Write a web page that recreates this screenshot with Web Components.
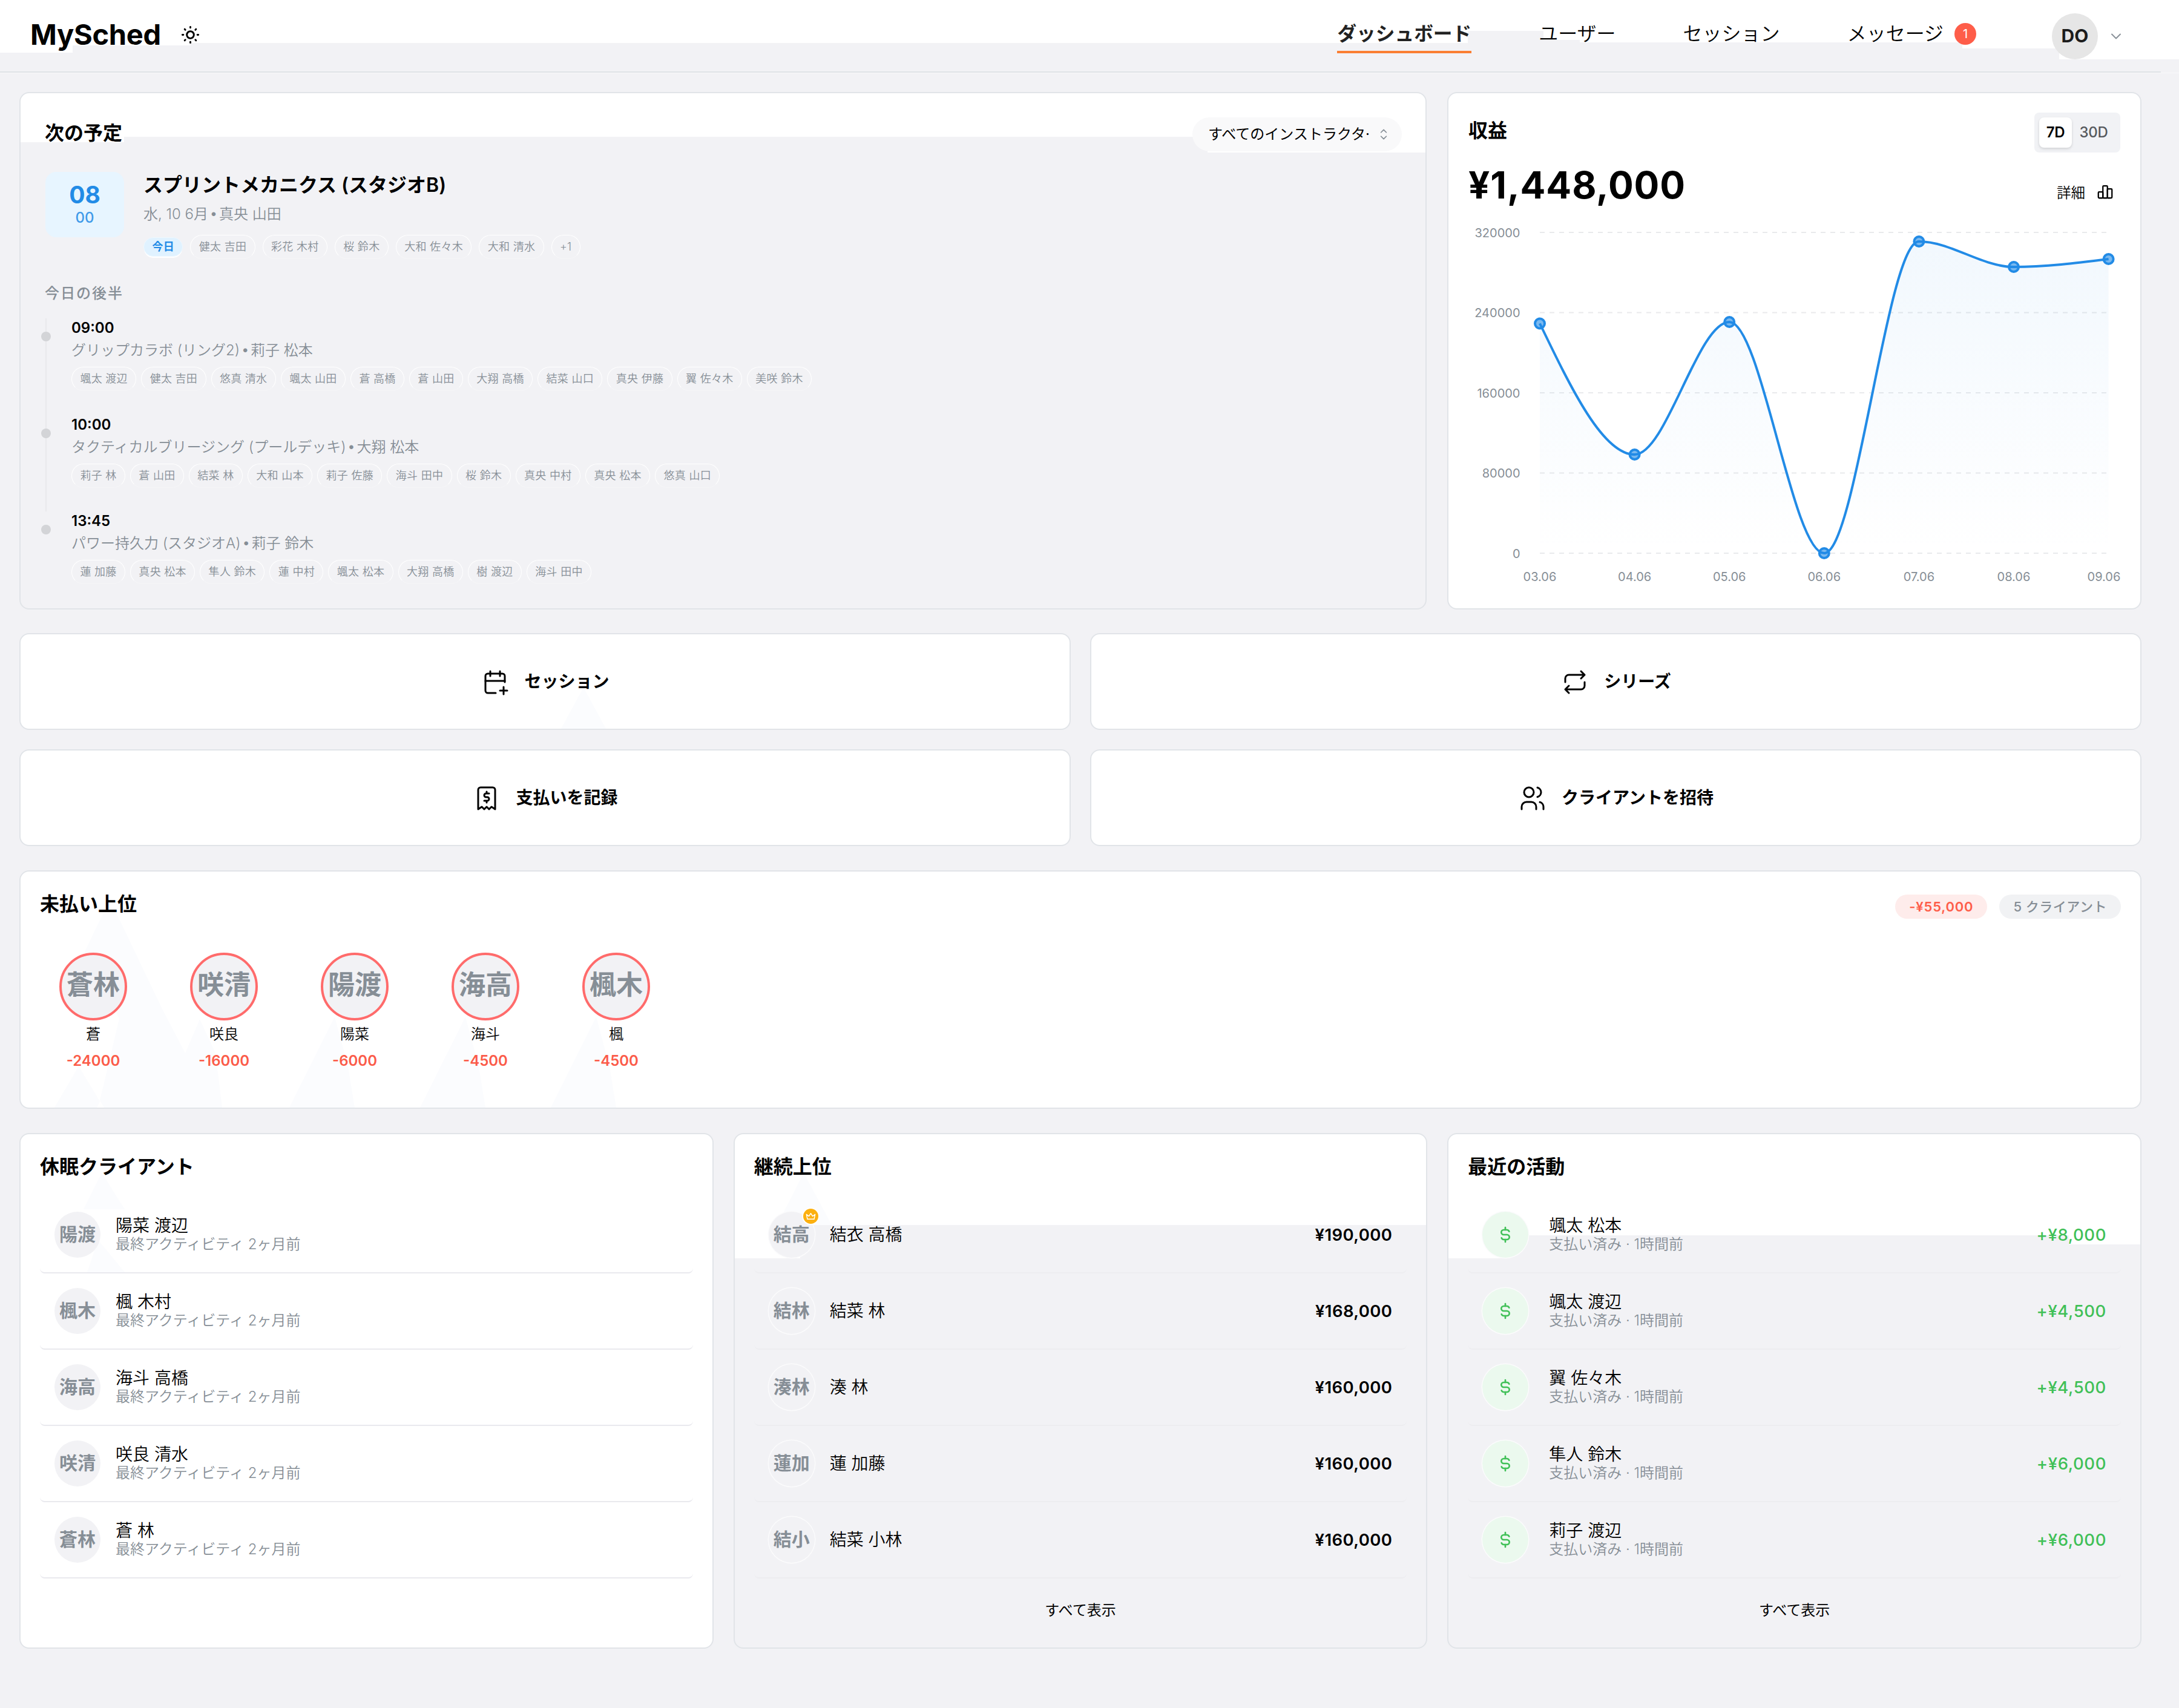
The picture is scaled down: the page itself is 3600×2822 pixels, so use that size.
<!DOCTYPE html>
<html lang="ja">
<head>
<meta charset="utf-8">
<title>MySched</title>
<style>
  * { box-sizing: border-box; }
  body {
    margin: 0;
    width: 3600px;
    height: 2822px;
    overflow: hidden;
    background: #f2f2f5;
    color: #000;
    font-family: Inter, "Noto Sans CJK JP", sans-serif;
  }
  main {
    width: 3570px;
    padding: 32px 32px 0;
    display: flex;
    flex-direction: column;
    gap: 40px;
  }
  .grid { display: grid; gap: 32px; }
  .top { grid-template-columns: 2325px 1fr; gap: 34px; height: 854px; }
  .actions { grid-template-columns: 1fr 1fr; grid-auto-rows: 160px; }
  .bottom { grid-template-columns: repeat(3, 1fr); gap: 33px; height: 852px; }
</style>
</head>
<body>
<my-header></my-header>
<main>
  <div class="grid top">
    <my-upcoming></my-upcoming>
    <my-revenue></my-revenue>
  </div>
  <div class="grid actions">
    <my-action icon="calendar">セッション</my-action>
    <my-action icon="repeat">シリーズ</my-action>
    <my-action icon="receipt">支払いを記録</my-action>
    <my-action icon="users">クライアントを招待</my-action>
  </div>
  <my-unpaid></my-unpaid>
  <div class="grid bottom">
    <my-card title-text="休眠クライアント" fill="dormant">
      <my-row initials="陽渡" sub="最終アクティビティ 2ヶ月前">陽菜 渡辺</my-row>
      <my-row initials="楓木" sub="最終アクティビティ 2ヶ月前">楓 木村</my-row>
      <my-row initials="海高" sub="最終アクティビティ 2ヶ月前">海斗 高橋</my-row>
      <my-row initials="咲清" sub="最終アクティビティ 2ヶ月前">咲良 清水</my-row>
      <my-row initials="蒼林" sub="最終アクティビティ 2ヶ月前">蒼 林</my-row>
    </my-card>
    <my-card title-text="継続上位" fill="loyal" more="すべて表示">
      <my-row soft crown initials="結高" amount="¥190,000">結衣 高橋</my-row>
      <my-row soft initials="結林" amount="¥168,000">結菜 林</my-row>
      <my-row soft initials="湊林" amount="¥160,000">湊 林</my-row>
      <my-row soft initials="蓮加" amount="¥160,000">蓮 加藤</my-row>
      <my-row soft initials="結小" amount="¥160,000">結菜 小林</my-row>
    </my-card>
    <my-card title-text="最近の活動" fill="activity" more="すべて表示">
      <my-row soft paid sub="支払い済み · 1時間前" amount="+¥8,000">颯太 松本</my-row>
      <my-row soft paid sub="支払い済み · 1時間前" amount="+¥4,500">颯太 渡辺</my-row>
      <my-row soft paid sub="支払い済み · 1時間前" amount="+¥4,500">翼 佐々木</my-row>
      <my-row soft paid sub="支払い済み · 1時間前" amount="+¥6,000">隼人 鈴木</my-row>
      <my-row soft paid sub="支払い済み · 1時間前" amount="+¥6,000">莉子 渡辺</my-row>
    </my-card>
  </div>
</main>

<script>
const ICONS = {
  sun: '<path d="M8 12a4 4 0 1 0 8 0a4 4 0 1 0 -8 0"/><path d="M3 12h1m8 -9v1m8 8h1m-9 8v1m-6.4 -15.4l.7 .7m12.1 -.7l-.7 .7m0 11.4l.7 .7m-12.1 -.7l-.7 .7"/>',
  calendar: '<path d="M12.5 21h-6.5a2 2 0 0 1 -2 -2v-12a2 2 0 0 1 2 -2h12a2 2 0 0 1 2 2v5"/><path d="M16 3v4M8 3v4M4 11h16M16 19h6M19 16v6"/>',
  repeat: '<path d="M4 12v-3a3 3 0 0 1 3 -3h13m-3 -3l3 3l-3 3"/><path d="M20 12v3a3 3 0 0 1 -3 3h-13m3 3l-3 -3l3 -3"/>',
  receipt: '<path d="M5 21v-16a2 2 0 0 1 2 -2h10a2 2 0 0 1 2 2v16l-3 -2l-2 2l-2 -2l-2 2l-2 -2l-3 2"/><path d="M14 8h-2.5a1.5 1.5 0 0 0 0 3h1a1.5 1.5 0 0 1 0 3h-2.5m2 0v1.5m0 -9v1.5"/>',
  users: '<path d="M5 7a4 4 0 1 0 8 0a4 4 0 1 0 -8 0"/><path d="M3 21v-2a4 4 0 0 1 4 -4h4a4 4 0 0 1 4 4v2"/><path d="M16 3.13a4 4 0 0 1 0 7.75"/><path d="M21 21v-2a4 4 0 0 0 -3 -3.85"/>',
  bars: '<path d="M3 13a1 1 0 0 1 1 -1h4a1 1 0 0 1 1 1v6a1 1 0 0 1 -1 1h-4a1 1 0 0 1 -1 -1z"/><path d="M15 9a1 1 0 0 1 1 -1h4a1 1 0 0 1 1 1v10a1 1 0 0 1 -1 1h-4a1 1 0 0 1 -1 -1z"/><path d="M9 5a1 1 0 0 1 1 -1h4a1 1 0 0 1 1 1v14a1 1 0 0 1 -1 1h-4a1 1 0 0 1 -1 -1z"/><path d="M4 20h14"/>',
  dollar: '<path d="M16.7 8a3 3 0 0 0 -2.7 -2h-4a3 3 0 0 0 0 6h4a3 3 0 0 1 0 6h-4a3 3 0 0 1 -2.7 -2"/><path d="M12 3v3m0 12v3"/>',
  crown: '<path d="M12 6l4 6l5 -4l-2 10h-14l-2 -10l5 4z"/>',
  chevron: '<path d="M6 9l6 6l6 -6"/>',
  selector: '<path d="M8 9l4 -4l4 4"/><path d="M16 15l-4 4l-4 -4"/>'
};

class BaseElement extends HTMLElement {
  constructor() {
    super();
    this.attachShadow({ mode: "open" });
  }
  attr(name) {
    return this.getAttribute(name) || "";
  }
  getStyles() {
    return "";
  }
  connectedCallback() {
    const template = document.createElement("template");
    template.innerHTML = `<style>* { box-sizing: border-box; }${this.getStyles()}</style>${this.getTemplate()}`;
    this.shadowRoot.appendChild(template.content.cloneNode(true));
  }
}

class MyIcon extends BaseElement {
  getTemplate() {
    const size = this.attr("size") || 48;
    return `<svg width="${size}" height="${size}" viewBox="0 0 24 24" fill="none" stroke="currentColor"
      stroke-width="${this.attr("stroke") || 1.5}" stroke-linecap="round" stroke-linejoin="round">${ICONS[this.attr("name")]}</svg>`;
  }
  getStyles() {
    return `:host { display: block; flex: none; line-height: 0; } svg { display: block; }`;
  }
}
customElements.define("my-icon", MyIcon);

class MyHeader extends BaseElement {
  getTemplate() {
    return `
      <div class="logo">MySched</div>
      <my-icon name="sun" size="35" stroke="2"></my-icon>
      <nav>
        <a class="active">ダッシュボード</a>
        <a>ユーザー</a>
        <a>セッション</a>
        <a>メッセージ<b>1</b></a>
      </nav>
      <div class="avatar">DO</div>
      <my-icon class="chev" name="chevron" size="28" stroke="1.6"></my-icon>
    `;
  }
  getStyles() {
    return `
      :host {
        position: relative;
        display: flex;
        align-items: center;
        height: 120px;
        padding: 0 90px 0 50px;
        background:
          linear-gradient(#fff, #fff) 0 0 / 120px 87px no-repeat,
          linear-gradient(#fff, #fff) 120px 0 / 195px 75px no-repeat,
          linear-gradient(#fff, #fff) 315px 0 / 2110px 71px no-repeat,
          linear-gradient(#fff, #fff) 2425px 0 / 125px 51px no-repeat,
          linear-gradient(#fff, #fff) 2550px 0 / 60px 66px no-repeat,
          linear-gradient(#fff, #fff) 2610px 0 / 632px 70px no-repeat,
          linear-gradient(#fff, #fff) 3242px 0 / 160px 80px no-repeat,
          linear-gradient(#fff, #fff) 3402px 0 / 198px 98px no-repeat,
          linear-gradient(#dee2e6, #dee2e6) 0 118px / 3570px 2px no-repeat,
          #f2f2f5;
        box-shadow: 0 1px 0 #fafafb;
      }
      .logo { font-size: 47px; font-weight: 700; line-height: 56px; letter-spacing: -0.3px; margin-top: -7px; }
      my-icon { margin: -5px 0 0 31px; }
      nav { display: flex; gap: 111px; margin-left: auto; }
      a {
        display: flex;
        align-items: center;
        height: 62px;
        padding-top: 2px;
        border-bottom: 4px solid transparent;
        font-size: 32px;
        font-weight: 350;
        line-height: 56px;
        margin-top: -6px;
      }
      .active { font-size: 31.7px; font-weight: 600; color: #222; border-color: #fb7f33; }
      b {
        width: 36px; height: 36px; margin-left: 18px;
        border-radius: 50%;
        background: #fe5d49; color: #fff;
        font-size: 20px; font-weight: 400; line-height: 36px; text-align: center;
      }
      .avatar {
        width: 76px; height: 76px; margin-left: 125px;
        border-radius: 50%;
        background: #e6e6e6; color: #1c1c1c;
        font-size: 30px; font-weight: 700; line-height: 74px; text-align: center;
      }
      .chev { margin: 0 0 0 16px; color: #868e96; }
    `;
  }
}
customElements.define("my-header", MyHeader);

class MyTag extends BaseElement {
  getTemplate() {
    return `<slot></slot>`;
  }
  getStyles() {
    return `
      :host {
        display: block;
        height: 40px;
        padding: 0 13.4px;
        border: 1px solid #fff;
        border-bottom-color: #f5f5f7;
        border-radius: 20px;
        color: #868e96;
        font-size: 18px;
        font-weight: 350;
        line-height: 38px;
        letter-spacing: 0.28px;
        white-space: nowrap;
      }
      :host([today]) {
        height: 32px;
        align-self: center;
        background: #e0f2ff;
        border-color: #eef8ff;
        color: #228be6;
        font-weight: 600;
        line-height: 30px;
        box-shadow: 0 3px 0 -1px #fff;
      }
    `;
  }
}
customElements.define("my-tag", MyTag);

class MyUpcoming extends BaseElement {
  getTemplate() {
    const tags = list => list.split(",").map(name => `<my-tag>${name}</my-tag>`).join("");
    const later = [
      ["09:00", "グリップカラボ (リング2) <i>•</i> 莉子 松本", "颯太 渡辺,健太 吉田,悠真 清水,颯太 山田,蒼 高橋,蒼 山田,大翔 高橋,結菜 山口,真央 伊藤,翼 佐々木,美咲 鈴木"],
      ["10:00", "タクティカルブリージング (プールデッキ) <i>•</i> 大翔 松本", "莉子 林,蒼 山田,結菜 林,大和 山本,莉子 佐藤,海斗 田中,桜 鈴木,真央 中村,真央 松本,悠真 山口"],
      ["13:45", "パワー持久力 (スタジオA) <i>•</i> 莉子 鈴木", "蓮 加藤,真央 松本,隼人 鈴木,蓮 中村,颯太 松本,大翔 高橋,樹 渡辺,海斗 田中"]
    ];
    return `
      <header>
        <h2>次の予定</h2>
        <div class="select"><span>すべてのインストラクタ·</span><my-icon name="selector" size="26" stroke="1.6"></my-icon></div>
      </header>
      <section>
        <div class="time"><b>08</b><em>00</em></div>
        <div>
          <h3>スプリントメカニクス (スタジオB)</h3>
          <p>水, 10 6月 <i>•</i> 真央 山田</p>
          <div class="tags first"><my-tag today>今日</my-tag>${tags("健太 吉田,彩花 木村,桜 鈴木,大和 佐々木,大和 清水,+1")}</div>
        </div>
      </section>
      <h4>今日の後半</h4>
      <ol>
        ${later.map(([time, info, names]) => `<li><b>${time}</b><p>${info}</p><div class="tags">${tags(names)}</div></li>`).join("")}
      </ol>
    `;
  }
  getStyles() {
    return `
      :host {
        display: block;
        padding: 40px 39px 0 40px;
        border: 2px solid #e1e4e8;
        border-radius: 16px;
        background:
          linear-gradient(#fff, #fff) 0 0 / 171px 81px no-repeat,
          linear-gradient(#fff, #fff) 0 0 / 100% 72px no-repeat,
          linear-gradient(#fff, #fff) 100% 0 / 360px 98px no-repeat,
          #f2f2f5;
      }
      h2, h3, h4, p, ol { margin: 0; padding: 0; font-weight: 400; white-space: nowrap; }
      header { display: flex; justify-content: space-between; align-items: center; height: 56px; }
      h2 { font-size: 32px; font-weight: 600; line-height: 40px; margin-top: -4px; }
      .select {
        display: flex; align-items: center; justify-content: space-between;
        width: 346px; height: 56px; padding: 0 17px 0 26px;
        border-radius: 28px;
        background: #f9f9fa;
        font-size: 24px;
      }
      .select span { white-space: nowrap; line-height: 36px; }
      .select my-icon { color: #868e96; }
      section { display: flex; gap: 32px; margin: 34px 0 0 1px; }
      .time {
        display: flex; flex-direction: column; align-items: center;
        width: 130px; height: 108px; padding-top: 17px;
        border-radius: 18px;
        background: #e7f5ff; color: #228be6;
      }
      .time b { font-size: 39px; font-weight: 700; line-height: 42px; }
      .time em { font-size: 24px; font-style: normal; line-height: 33px; opacity: 0.85; font-weight: 500; }
      h3 { font-size: 32px; font-weight: 600; line-height: 40px; margin-top: 2px; }
      p { font-size: 24px; font-weight: 350; line-height: 32px; color: #868e96; }
      p i { font-family: "Liberation Sans", sans-serif; font-style: normal; margin: 0 -2px; }
      h3 + p { margin: 12px 0 18px; }
      h4 { font-size: 24px; font-weight: 500; letter-spacing: 2px; line-height: 30px; color: #868e96; margin-top: 42px; }
      .tags { display: flex; gap: 8px; }
      .tags.first { gap: 12px; }
      ol { position: relative; list-style: none; margin-top: 26px; }
      ol::before { content: ""; position: absolute; left: 1px; top: 0; width: 2px; height: 319px; background: #e9e9ec; }
      li { position: relative; height: 160px; padding-left: 44px; }
      li:last-child { margin-top: -1px; }
      li::before {
        content: ""; position: absolute; left: -6px; top: 22px;
        width: 16px; height: 16px; border-radius: 50%; background: #d3d4d7;
      }
      li b { display: block; font-size: 24px; font-weight: 600; line-height: 32px; }
      li p { margin: 5px 0 11px; }
    `;
  }
}
customElements.define("my-upcoming", MyUpcoming);

class MyRevenue extends BaseElement {
  // monotone cubic through the daily totals
  getLine(pts) {
    const slope = pts.slice(1).map((p, i) => (p[1] - pts[i][1]) / (p[0] - pts[i][0]));
    const t = pts.map((p, i) => {
      if (i === 0 || i === pts.length - 1) return 0;
      const a = slope[i - 1], b = slope[i];
      return (Math.sign(a) + Math.sign(b)) * Math.min(Math.abs(a), Math.abs(b), Math.abs(a + b) / 4);
    });
    t[0] = (3 * slope[0] - t[1]) / 2;
    t[t.length - 1] = (3 * slope[slope.length - 1] - t[t.length - 2]) / 2;
    return pts.slice(1).reduce((d, p, i) => {
      const [x, y] = pts[i];
      const dx = (p[0] - x) / 3;
      return d + `C${x + dx},${y + dx * t[i]} ${p[0] - dx},${p[1] - dx * t[i + 1]} ${p[0]},${p[1]}`;
    }, `M${pts[0]}`);
  }
  getChart() {
    const days = ["03.06", "04.06", "05.06", "06.06", "07.06", "08.06", "09.06"];
    const ys = [192.5, 409, 190, 572, 57, 99, 86];
    const pts = ys.map((y, i) => [151 + i * 156.6, y]);
    const line = this.getLine(pts);
    const grid = [320000, 240000, 160000, 80000, 0].map((v, i) => {
      const y = 42 + i * 132.5;
      return `<path d="M151 ${y}H1091" stroke="#e9eaec" stroke-width="2" stroke-dasharray="8 8"/>
        <text x="118.5" y="${y + 7.5}" text-anchor="end">${v}</text>`;
    }).join("");
    return `
      <svg width="1143" height="650" viewBox="0 0 1143 650">
        <defs><linearGradient id="area" x1="0" y1="0" x2="0" y2="1">
          <stop offset="0" stop-color="#228be6" stop-opacity=".06"/>
          <stop offset="1" stop-color="#228be6" stop-opacity="0"/>
        </linearGradient></defs>
        ${grid}
        <path d="${line}V572H151Z" fill="url(#area)"/>
        <path d="${line}" fill="none" stroke="#228be6" stroke-width="4"/>
        ${pts.map(([x, y]) => `<circle cx="${x}" cy="${y}" r="8" fill="#228be6" fill-opacity=".6" stroke="#228be6" stroke-width="4"/>`).join("")}
        ${days.map((d, i) => `<text x="${i === 6 ? 1083 : pts[i][0]}" y="618" text-anchor="middle">${d}</text>`).join("")}
      </svg>`;
  }
  getTemplate() {
    return `
      <header><h2>収益</h2><div class="seg"><span class="on">7D</span><span>30D</span></div></header>
      <div class="sum"><strong>¥1,448,000</strong><a>詳細<my-icon name="bars" size="30" stroke="1.8"></my-icon></a></div>
      ${this.getChart()}
    `;
  }
  getStyles() {
    return `
      :host { display: block; padding: 32px 33px 0; border: 2px solid #e1e4e8; border-radius: 16px; background: #fff; }
      header, .sum { display: flex; justify-content: space-between; }
      h2 { margin: 10px 0 0; font-size: 32px; font-weight: 600; line-height: 40px; }
      .seg { display: flex; align-items: center; width: 142px; height: 66px; padding: 0 8px; border-radius: 8px; background: #f1f2f5; font-size: 24px; font-weight: 500; color: #55585c; }
      .seg span { flex: 1; text-align: center; line-height: 50px; letter-spacing: -0.3px; }
      .seg .on { flex: none; width: 54px; border-radius: 8px; background: #fff; color: #000; font-weight: 600; box-shadow: 0 2px 4px rgba(0,0,0,.14); }
      .sum { height: 72px; margin-top: 18px; }
      strong { font-size: 62px; font-weight: 700; line-height: 72px; letter-spacing: 0.9px; }
      a { display: flex; align-items: center; gap: 18px; margin: 23px 10px 0 0; height: 48px; font-size: 23.5px; font-weight: 350; }
      svg { display: block; margin: 0 -33px; }
      text { font-size: 20px; fill: #868e96; }
    `;
  }
}
customElements.define("my-revenue", MyRevenue);

class MyAction extends BaseElement {
  getTemplate() {
    const glow = this.attr("icon") === "calendar"
      ? `<svg class="glow" width="74" height="68" viewBox="0 0 74 68"><path d="M37 0L74 68H0Z" fill="#fbfcfe"/></svg>` : "";
    return `${glow}<my-icon name="${this.attr("icon")}"></my-icon><span><slot></slot></span>`;
  }
  getStyles() {
    return `
      :host {
        position: relative;
        display: flex; align-items: center; justify-content: center; gap: 24px;
        border: 2px solid #e1e4e8; border-radius: 16px;
        background: #fff;
        font-size: 28px; font-weight: 600; line-height: 40px;
      }
      span { position: relative; }
      my-icon { margin-top: 1px; }
      .glow { position: absolute; left: 893px; bottom: 0; }
    `;
  }
}
customElements.define("my-action", MyAction);

class MyUnpaid extends BaseElement {
  getTemplate() {
    const people = [["蒼林", "蒼", "-24000"], ["咲清", "咲良", "-16000"], ["陽渡", "陽菜", "-6000"], ["海高", "海斗", "-4500"], ["楓木", "楓", "-4500"]];
    return `
      <svg class="glow" width="1060" height="390" viewBox="34 1440 1060 390" fill="#fbfcfe">
        <path d="M171 1508H192L268 1667L306 1740L330 1684L356 1740L367 1830H172L165 1818L197 1683L140 1572Z"/>
        <path d="M130 1762L165 1820L160 1830H90Z"/>
        <path d="M553 1680L575 1762L586 1830H478Z"/>
        <path d="M769 1680L791 1762L802 1830H694Z"/>
        <path d="M985 1680L1007 1762L1018 1830H910Z"/>
      </svg>
      <header><h2>未払い上位</h2><span class="badge red">-¥55,000</span><span class="badge">5 クライアント</span></header>
      <div class="list">
        ${people.map(([i, n, a]) => `<div class="item"><div class="avatar">${i}</div><span>${n}</span><b>${a}</b></div>`).join("")}
      </div>
    `;
  }
  getStyles() {
    return `
      :host { position: relative; display: block; height: 394px; padding: 34px 32px 0; border: 2px solid #e1e4e8; border-radius: 16px; background: #fff; }
      .glow { position: absolute; left: 0; top: 0; }
      header { position: relative; display: flex; gap: 20px; }
      h2 { margin: 0 auto 0 0; font-size: 32px; font-weight: 600; line-height: 40px; }
      .badge {
        height: 40px; margin-top: 4px; padding: 0 23px;
        border-radius: 20px;
        background: #f1f2f4; color: #868e96;
        font-size: 22px; font-weight: 500; line-height: 40px; letter-spacing: 0.5px;
      }
      .red { background: #feeceb; color: #fe5d49; font-weight: 600; letter-spacing: 0.8px; }
      .list { position: relative; display: flex; gap: 40px; margin-top: 56px; }
      .item { display: flex; flex-direction: column; align-items: center; width: 176px; font-size: 24px; line-height: 32px; }
      .item span { font-weight: 350; }
      .avatar {
        display: flex; justify-content: center;
        width: 112px; height: 112px; margin-bottom: 7px;
        border: 4px solid #ff6b6b; border-radius: 50%;
        background: #f2f2f5; color: #868e96;
        font-size: 44px; font-weight: 700; line-height: 99px; white-space: nowrap;
      }
      b { margin-top: 12px; font-weight: 600; color: #fb5b49; }
    `;
  }
}
customElements.define("my-unpaid", MyUnpaid);

class MyCard extends BaseElement {
  getTemplate() {
    const glows = {
      dormant: "M134 64L172 124H104ZM128 175L172 228H110Z",
      loyal: "M114 64L160 150H70Z"
    };
    const glow = glows[this.attr("fill")];
    return `
      ${glow ? `<svg class="glow" width="240" height="230"><path d="${glow}" fill="#fbfcfe"/></svg>` : ""}
      <h2>${this.attr("title-text")}</h2>
      <slot></slot>
      ${this.attr("more") ? `<div class="more">${this.attr("more")}</div>` : ""}
    `;
  }
  getStyles() {
    return `
      :host { position: relative; display: block; padding: 34px 32px 0; border: 2px solid #e1e4e8; border-radius: 16px; background: #fff; }
      :host([fill="loyal"]) {
        background:
          linear-gradient(#fff, #fff) 0 0 / 100% 150px no-repeat,
          linear-gradient(#fff, #fff) 0 0 / 108px 205px no-repeat,
          #f2f2f5;
      }
      :host([fill="activity"]) {
        background:
          linear-gradient(#fff, #fff) 0 0 / 100% 167px no-repeat,
          linear-gradient(#fff, #fff) 0 0 / 98px 205px no-repeat,
          linear-gradient(#fff, #fff) 100% 0 / 118px 182px no-repeat,
          #f2f2f5;
      }
      .glow { position: absolute; left: 0; top: 0; }
      h2 { position: relative; margin: 0 0 30px; font-size: 32px; font-weight: 600; line-height: 40px; }
      .more { margin-top: 37px; font-size: 24px; line-height: 32px; text-align: center; }
    `;
  }
}
customElements.define("my-card", MyCard);

class MyRow extends BaseElement {
  getTemplate() {
    const mark = this.hasAttribute("paid") ? `<my-icon name="dollar" size="32" stroke="2"></my-icon>` : this.attr("initials");
    return `
      <div class="avatar">${mark}${this.hasAttribute("crown") ? `<i><my-icon name="crown" size="19" stroke="1.8"></my-icon></i>` : ""}</div>
      <div class="text"><div class="name"><slot></slot></div>${this.attr("sub") ? `<div class="sub">${this.attr("sub")}</div>` : ""}</div>
      <b>${this.attr("amount")}</b>
    `;
  }
  getStyles() {
    return `
      :host {
        position: relative;
        display: flex; align-items: center;
        height: 126px; padding: 0 24px;
        border-bottom: 2px solid #e9e9ee;
        border-radius: 8px;
      }
      :host([soft]) { border-bottom-color: #ededf0; }
      .avatar {
        position: relative;
        display: flex; align-items: center; justify-content: center; flex: none;
        width: 76px; height: 76px; margin-right: 25px; padding-bottom: 3px;
        border-radius: 50%;
        background: #f2f2f5; color: #868e96;
        font-size: 30px; font-weight: 700; line-height: 72px; white-space: nowrap;
      }
      :host([soft]) .avatar { box-shadow: 0 0 0 1.5px #fbfbfc; }
      :host([paid]) .avatar { margin-right: 34px; padding: 0; background: #ebf9ee; color: #40c057; }
      i {
        position: absolute; right: -6px; top: -5px;
        width: 25px; height: 25px; padding: 3px;
        border-radius: 50%;
        background: #fcb010; color: #fff;
        box-shadow: 0 0 0 2px #fff;
      }
      .name { font-size: 28px; font-weight: 350; line-height: 34px; margin-top: -1px; }
      .sub { font-size: 24px; font-weight: 350; line-height: 30px; color: #868e96; margin-top: -1px; }
      b { margin-left: auto; font-size: 27.5px; font-weight: 600; letter-spacing: 0.4px; }
      :host([paid]) b { color: #40c057; font-weight: 500; letter-spacing: 0.6px; }
    `;
  }
}
customElements.define("my-row", MyRow);
</script>
</body>
</html>
